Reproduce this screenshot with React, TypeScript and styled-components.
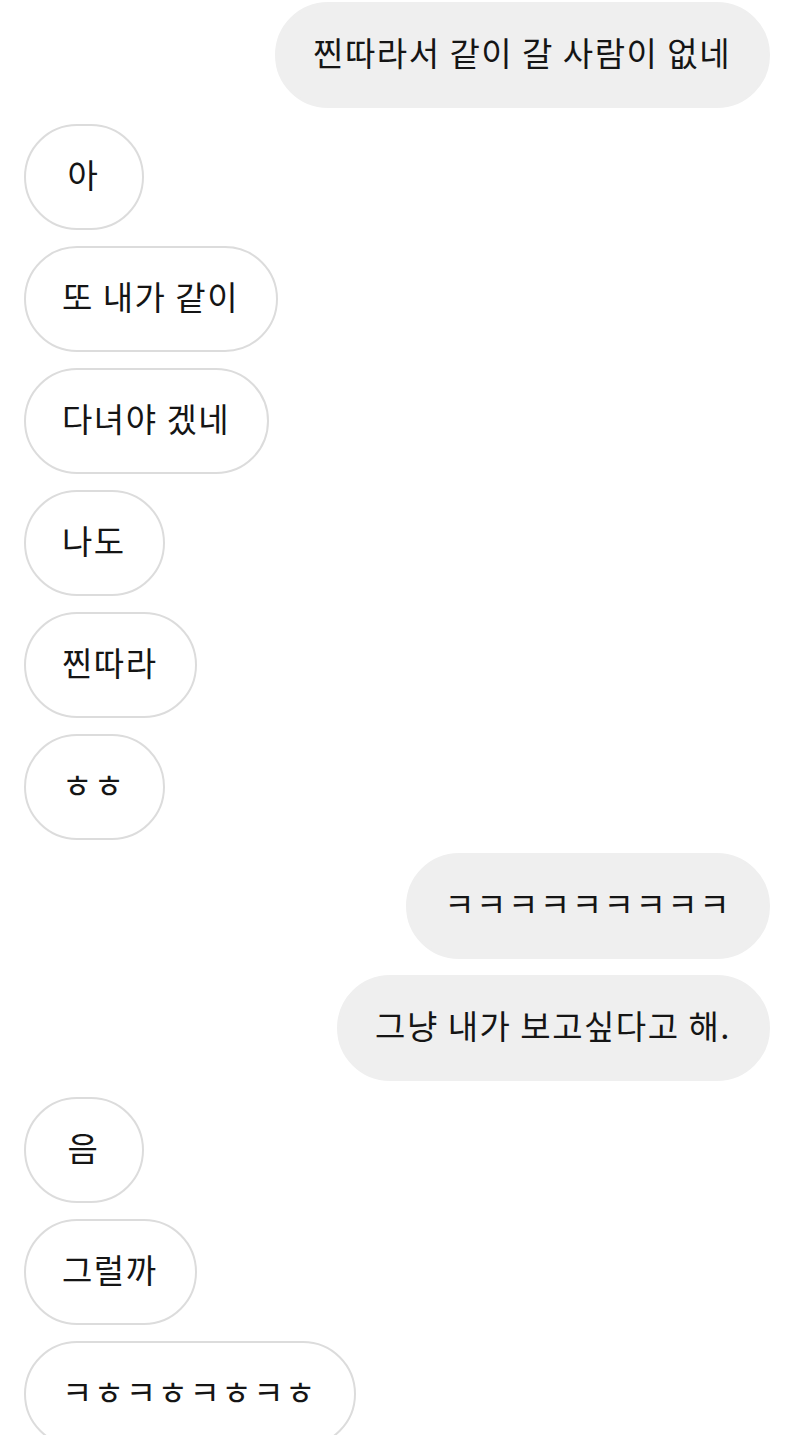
import React from "react"
import styled, { createGlobalStyle } from "styled-components"

type Side = "me" | "them"

interface Message {
  side: Side
  text: string
}

const messages: Message[] = [
  { side: "me", text: "찐따라서 같이 갈 사람이 없네" },
  { side: "them", text: "아" },
  { side: "them", text: "또 내가 같이" },
  { side: "them", text: "다녀야 겠네" },
  { side: "them", text: "나도" },
  { side: "them", text: "찐따라" },
  { side: "them", text: "ㅎㅎ" },
  { side: "me", text: "ㅋㅋㅋㅋㅋㅋㅋㅋㅋ" },
  { side: "me", text: "그냥 내가 보고싶다고 해." },
  { side: "them", text: "음" },
  { side: "them", text: "그럴까" },
  { side: "them", text: "ㅋㅎㅋㅎㅋㅎㅋㅎ" },
]

const GlobalStyle = createGlobalStyle`
  html, body {
    margin: 0;
    padding: 0;
    background: #ffffff;
  }
  body {
    font-family: "Noto Sans CJK KR", "Noto Sans", sans-serif;
    color: #111;
  }
`

export default function App() {
  return (
    <>
      <GlobalStyle />
      <Thread>
        {messages.map((m, i) => {
          // my bubble right after theirs sits a little closer
          const tight = i > 0 && m.side === "me" && messages[i - 1].side === "them"
          return (
            <Row key={i} side={m.side} tight={tight}>
              <Bubble side={m.side}>{m.text}</Bubble>
            </Row>
          )
        })}
      </Thread>
    </>
  )
}

const Thread = styled.div`
  display: flex;
  flex-direction: column;
  gap: 16px;
  padding: 2px 30px 0 24px;
  width: 800px;
  height: 1435px;
  box-sizing: border-box;
  overflow: hidden;
`

const Row = styled.div<{ side: Side; tight?: boolean }>`
  display: flex;
  justify-content: ${(p) => (p.side === "me" ? "flex-end" : "flex-start")};
  margin-top: ${(p) => (p.tight ? "-3px" : "0")};
`

const Bubble = styled.div<{ side: Side }>`
  display: flex;
  align-items: center;
  justify-content: center;
  min-width: 120px;
  height: 106px;
  box-sizing: border-box;
  padding: 0 37px 5px 36px;
  border-radius: 53px;
  font-size: 33px;
  letter-spacing: 1.5px;
  line-height: 1;
  white-space: nowrap;
  color: #151515;
  background: ${(p) => (p.side === "me" ? "#efefef" : "#ffffff")};
  border: 2px solid ${(p) => (p.side === "me" ? "#efefef" : "#dcdcdc")};
`
